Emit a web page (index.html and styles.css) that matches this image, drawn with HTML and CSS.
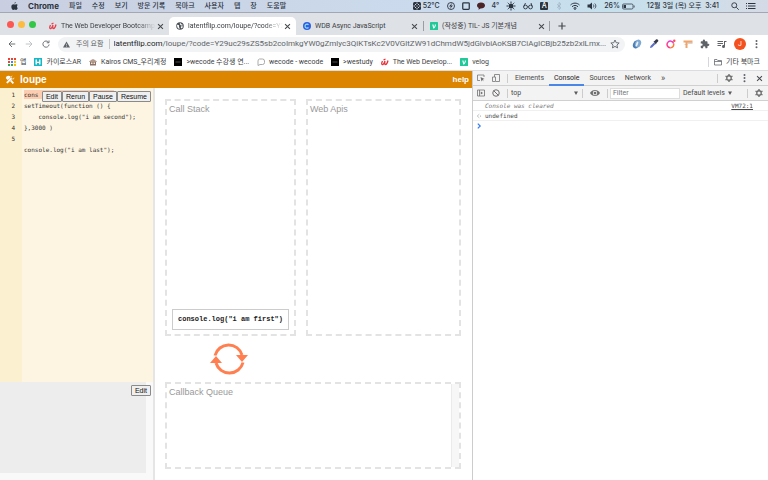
FILE: index.html
```html
<!DOCTYPE html>
<html lang="ko">

<head>
    <meta charset="UTF-8">
    <meta name="viewport" content="width=device-width, initial-scale=1.0">
    <title>loupe</title>
    <link rel="stylesheet" href="styles.css">
</head>

<body>
    <!-- 메뉴 막대 -->
    <header class="menubar">
        <svg class="apple" viewBox="0 0 14 16"><path d="M9.600 0c.1 1.400-1 3-2.700 3.100C6.700 1.700 8.100.2 9.600 0zM12 8.300c0-1.500 1.100-2.300 1.300-2.500-.9-1.200-2.200-1.400-2.700-1.400-1.300-.1-2.300.7-2.900.7-.6 0-1.500-.7-2.600-.7C3.200 4.500.7 5.800.7 9.300c0 3 2 6.500 3.900 6.500 1 0 1.500-.7 2.800-.7 1.300 0 1.600.7 2.700.7 1.700 0 3-2.700 3.400-3.900-.9-.4-1.500-1.800-1.500-3.600z"/></svg>
        <nav class="menus">
            <b>Chrome</b>
            <span>파일</span>
            <span>수정</span>
            <span>보기</span>
            <span>방문 기록</span>
            <span>북마크</span>
            <span>사용자</span>
            <span>탭</span>
            <span>창</span>
            <span>도움말</span>
        </nav>
        <div class="status">
            <span class="pair">
                <svg class="ic8" viewBox="0 0 16 16"><rect width="16" height="16" rx="3"/><path d="M4 4h2v2H4zM10 4h2v2h-2zM4 10h2v2H4zM10 10h2v2h-2zM7 7h2v2H7zM7 1h2v3H7zM7 12h2v3H7zM1 7h3v2H1zM12 7h3v2h-3z" fill="#cdd6e6"/></svg>
                52°C
            </span>
            <svg class="ic8" viewBox="0 0 16 16"><circle cx="8" cy="8" r="7" fill="none" stroke="#2c3440" stroke-width="1.800"/><path d="M11 1 4 9h4l-3 6 7-8H8z"/></svg>
            <svg class="ic8" viewBox="0 0 16 16"><rect x="1.500" y="1.500" width="13" height="13" rx="1.500" fill="none" stroke="#2c3440" stroke-width="2.500"/></svg>
            <svg class="ic8" viewBox="0 0 16 16"><path d="M8 1C3.500 1 0 3.500 0 7c0 2.300 1.500 4 3.500 5L3 15.500 7 13c5 .2 9-2.500 9-6S12.500 1 8 1z" fill="#4a2427"/></svg>
            <span>4°</span>
            <svg class="ic10" viewBox="0 0 20 20"><circle cx="10" cy="10" r="5"/><path d="M10 1v3M10 16v3M1 10h3M16 10h3M3.500 3.500l2 2M14.500 14.500l2 2M3.500 16.500l2-2M14.500 5.500l2-2" stroke="#2c3440" stroke-width="2"/></svg>
            <svg class="ic10" viewBox="0 0 20 20" fill="none" stroke="#2c3440" stroke-width="1.800"><circle cx="5" cy="12" r="3.800"/><circle cx="15" cy="12" r="3.800"/><path d="M9 12c.5-1 1.500-1 2 0M1.500 11 5 4M18.500 11 16 4"/></svg>
            <span class="input-badge">A</span>
            <svg class="ic8" viewBox="0 0 16 16"><path d="M4 4.500 12 11.500 8 15V1l4 3.500L4 11.500" fill="none" stroke="#9db0c2" stroke-width="1.500"/></svg>
            <svg class="ic10" viewBox="0 0 20 16" fill="none" stroke="#2c3440" stroke-width="2"><path d="M1 6c5-5 13-5 18 0M4 9.500c3.500-3.500 8.500-3.500 12 0M7 12.500c2-1.800 4-1.800 6 0"/><circle cx="10" cy="14" r="1"/></svg>
            <svg class="ic10" viewBox="0 0 20 16"><path d="M1 5h4l5-4v14l-5-4H1z"/><path d="M12.500 5c1.500 2 1.500 4 0 6M15.500 3c3 3 3 7 0 10" fill="none" stroke="#2c3440" stroke-width="1.600"/></svg>
            <span class="pair">26%
                <svg class="battery" viewBox="0 0 26 14"><rect x="1" y="2" width="21" height="10" rx="2.500" fill="none" stroke="#2c3440" stroke-width="1.500"/><rect x="3" y="4" width="5" height="6"/><path d="M23.500 5h1.500v4h-1.500z"/></svg>
            </span>
            <time class="clock">12월 3일 (목) 오후&nbsp; 3:41</time>
            <svg class="ic8" viewBox="0 0 16 16" fill="none" stroke="#2c3440" stroke-width="1.800"><circle cx="6.500" cy="6.500" r="5"/><path d="m10.500 10.500 5 5"/></svg>
            <svg class="ic10" viewBox="0 0 20 16"><path d="M0 2h2v2H0zM0 7h2v2H0zM0 12h2v2H0zM4 2h15v2H4zM4 7h15v2H4zM4 12h15v2H4z"/></svg>
        </div>
    </header>

    <!-- 탭 -->
    <div class="tabstrip">
        <div class="lights"><i class="red"></i><i class="yellow"></i><i class="green"></i></div>
        <div class="tab">
            <svg class="ic8" viewBox="0 0 16 16" fill="none" stroke="#e8404a" stroke-width="2.600"><path d="M3 6c-3 6-1 8 1 7s3-4 4-7c-1 5-1 7 1 7s4-4 5-8M5 4l4-2"/></svg>
            <span class="title fade">The Web Developer Bootcamp</span>
            <button class="close" aria-label="탭 닫기"><svg viewBox="0 0 10 10"><path d="m1.500 1.500 7 7m0-7-7 7"/></svg></button>
        </div>
        <div class="tab active">
            <svg class="ic8" viewBox="0 0 16 16"><circle cx="8" cy="8" r="7.500" fill="#4a4f56"/><path d="M2 6c3-1 5 1 4 3s2 2 1 5c-3-1-5-3-5-8zM8 2c2 0 2 3 4 3l2 1c-2 2-4 1-5 0S7 4 8 2zM10 9c2-1 4 0 4 1l-3 3c-1-1-2-3-1-4z" fill="#fff"/></svg>
            <span class="title fade">latentflip.com/loupe/?code=Y2</span>
            <button class="close" aria-label="탭 닫기"><svg viewBox="0 0 10 10"><path d="m1.500 1.500 7 7m0-7-7 7"/></svg></button>
        </div>
        <div class="tab">
            <svg class="ic8" viewBox="0 0 16 16"><circle cx="8" cy="8" r="8" fill="#2f5fe0"/><path d="M11 5.500A4 4 0 1 0 11 11" fill="none" stroke="#8fe3ff" stroke-width="2.200"/></svg>
            <span class="title">WDB Async JavaScript</span>
            <button class="close" aria-label="탭 닫기"><svg viewBox="0 0 10 10"><path d="m1.500 1.500 7 7m0-7-7 7"/></svg></button>
        </div>
        <div class="tab line">
            <svg class="ic8" viewBox="0 0 16 16"><rect width="16" height="16" rx="1" fill="#20c997"/><path d="M4.500 5H7l1 5c1-1 2-3 1.500-5H12c0 3-2 6-4 8H6.500z" fill="#fff"/></svg>
            <span class="title">(작성중) TIL- JS 기본개념</span>
            <button class="close" aria-label="탭 닫기"><svg viewBox="0 0 10 10"><path d="m1.500 1.500 7 7m0-7-7 7"/></svg></button>
        </div>
        <button class="newtab" aria-label="새 탭"><svg viewBox="0 0 10 10"><path d="M5 .5v9M.5 5h9"/></svg></button>
    </div>

    <!-- 주소창 -->
    <div class="toolbar">
        <div class="nav-btns">
            <svg viewBox="0 0 16 16"><path d="M14.500 8H2m6-6L2 8l6 6"/></svg>
            <svg class="off" viewBox="0 0 16 16"><path d="M1.500 8H14M8 2l6 6-6 6"/></svg>
            <svg viewBox="0 0 16 16"><path d="M13 4.500A6.200 6.200 0 1 0 14.200 9M14 1v4.500H9.500"/></svg>
        </div>
        <div class="omnibox">
            <svg class="warn" viewBox="0 0 14 14"><path d="M7 1 14 13H0z"/><path d="M6.400 5.500h1.200v3.500H6.400zM6.400 10h1.200v1.300H6.400z" fill="#f1f3f4"/></svg>
            <span class="insecure">주의 요함</span>
            <span class="url"><em>latentflip.com</em>/loupe/?code=Y29uc29sZS5sb2coImkgYW0gZmlyc3QiKTsKc2V0VGltZW91dChmdW5jdGlvbiAoKSB7CiAgICBjb25zb2xlLmx...</span>
            <svg class="ic10" viewBox="0 0 20 20"><path d="m10 2 2.400 5.400 5.900.6-4.400 4 1.200 5.800L10 14.800l-5.100 3L6.100 12 1.700 8l5.900-.6z" fill="none" stroke="#5f6368" stroke-width="1.800"/></svg>
        </div>
        <div class="exts">
            <svg class="ic10" viewBox="0 0 20 20"><ellipse cx="8" cy="11" rx="6" ry="8" transform="rotate(20 8 11)" fill="#4a7fb5"/><ellipse cx="12" cy="9" rx="6" ry="8" transform="rotate(20 12 9)" fill="#7fa9d1"/><ellipse cx="10" cy="10" rx="2" ry="5.500" transform="rotate(20 10 10)" fill="#e6eef7"/></svg>
            <svg class="ic10" viewBox="0 0 20 20"><path d="M2 18l1-4 7-7 3 3-7 7z" fill="#5b6fc4"/><path d="m9 5 2-1 3-3c3-2 6 2 4 4l-3 3-1 3z" fill="#333a48"/></svg>
            <svg class="ic10" viewBox="0 0 20 20" fill="none" stroke-width="3"><path d="M4 6.500a6.500 6.500 0 0 0 5 11" stroke="#ff3f8e"/><path d="M9 17.500a6.500 6.500 0 0 0 6-9" stroke="#ff7a2f"/><path d="M4 6.500a6.500 6.500 0 0 1 11 2" stroke="#e23fd0"/><circle cx="16.500" cy="3.500" r="2.500" fill="#ff4a55" stroke="none"/></svg>
            <svg class="ic10" viewBox="0 0 20 20"><path d="M1 3h18v4H9v11H5V7H1z" fill="#f0a56c"/><path d="M9 7h10v2H9zM3 11h6v1H3z" fill="#c7a58e"/></svg>
            <svg class="ic10" viewBox="0 0 20 20"><path d="M16.500 9.500H15V6a1.500 1.500 0 0 0-1.500-1.500H10V3.200a2.200 2.200 0 0 0-4.400 0v1.300H3A1.500 1.500 0 0 0 1.500 6v3H3a2.300 2.300 0 0 1 0 4.600H1.500V17A1.500 1.500 0 0 0 3 18.500h3.200V17a2.300 2.300 0 0 1 4.600 0v1.500h2.700A1.500 1.500 0 0 0 15 17v-3.100h1.500a2.200 2.200 0 0 0 0-4.400z" fill="#5f6368"/></svg>
            <svg class="ic10" viewBox="0 0 20 20"><path d="M1 4h11v2H1zM1 8h11v2H1zM1 12h7v2H1zM14 4h5v2h-3v9a3 3 0 1 1-2-2.800z" fill="#5f6368"/></svg>
        </div>
        <span class="avatar">J</span>
        <svg class="dots" viewBox="0 0 4 16"><circle cx="2" cy="3" r="1.600"/><circle cx="2" cy="8" r="1.600"/><circle cx="2" cy="13" r="1.600"/></svg>
    </div>

    <!-- 북마크 -->
    <nav class="bookmarks">
        <a href="#"><svg class="ic8" viewBox="0 0 16 16"><path d="M0 0h4v4H0zM6 0h4v4H6zM12 0h4v4h-4zM0 6h4v4H0z" fill="#ea4335"/><path d="M6 6h4v4H6z" fill="#4285f4"/><path d="M12 6h4v4h-4zM12 12h4v4h-4z" fill="#fbbc05"/><path d="M0 12h4v4H0zM6 12h4v4H6z" fill="#34a853"/></svg>앱</a>
        <a href="#"><svg class="ic8" viewBox="0 0 16 16"><rect width="16" height="16" fill="#15b8c4"/><path d="M3 3h3v4l2 1 2-1V3h3v10h-3V9.500l-2 1-2-1V13H3z" fill="#fff"/></svg>카이로스AR</a>
        <a href="#"><svg class="ic8" viewBox="0 0 16 16"><path d="M2 7h12v8H2z" fill="#8b7268"/><path d="M0 8c1-3 3-2 4-4l4-2 4 2c1 2 3 1 4 4z" fill="#b39a8c"/><path d="M4 9h3v3H4zM9 9h3v3H9z" fill="#f5e6d2"/></svg>Kairos CMS_우리계정</a>
        <a href="#"><svg class="ic8" viewBox="0 0 16 16"><path d="M0 0h16v16H0z" fill="#000"/><path d="M3 7.500h10v1H3z" fill="#999"/></svg>&gt;wecode 수강생 연...</a>
        <a href="#"><svg class="ic8" viewBox="0 0 16 16"><path d="M5 2h6a4 4 0 0 1 4 4v3a4 4 0 0 1-4 4H6l-4 2V6a4 4 0 0 1 3-4z" fill="none" stroke="#a2a2a2" stroke-width="1.800"/></svg>wecode - wecode</a>
        <a href="#"><svg class="ic8" viewBox="0 0 16 16"><path d="M0 0h16v16H0z" fill="#000"/><path d="M3 7.500h10v1H3z" fill="#999"/></svg>&gt;westudy</a>
        <a href="#"><svg class="ic8" viewBox="0 0 16 16" fill="none" stroke="#e8303a" stroke-width="2.600"><path d="M3 6c-3 6-1 8 1 7s3-4 4-7c-1 5-1 7 1 7s4-4 5-8M5 4l4-2"/></svg>The Web Develop...</a>
        <a href="#"><svg class="ic8" viewBox="0 0 16 16"><rect width="16" height="16" rx="1" fill="#20c997"/><path d="M4.500 5H7l1 5c1-1 2-3 1.500-5H12c0 3-2 6-4 8H6.500z" fill="#fff"/></svg>velog</a>
        <a href="#" class="others"><svg class="ic8" viewBox="0 0 16 16"><path d="M1 3h5l1.500 2H15v9H1zM1 7h14" fill="none" stroke="#5f6368" stroke-width="1.500"/></svg>기타 북마크</a>
    </nav>

    <main class="content">
        <section class="loupe">
            <div class="topbar">
                <h1><svg viewBox="0 0 20 20"><path d="M3 3c3-2 6-1.500 9 .5L9.500 6 18 15.500 15.500 18 6.500 8.500 5 10 1.500 6z"/><path d="M18.500 4.500 16 7l-2.500-.500L13 4l2.500-2.500c-3-1-5.500 1.500-4.500 4L2 14.500 5 17.500l8.500-8.500c3 1 6-1.500 5-4.500z" stroke="#dc8500" stroke-width=".8"/></svg>loupe</h1>
                <a href="#">help</a>
            </div>
            <div class="work">
                <div class="side">
                    <div class="editor">
                        <div class="gutter">1<br>2<br>3<br>4<br>5</div>
                        <pre class="code"><mark>cons</mark>
setTimeout(function () {
    console.log("i am second");
},3000 )

console.log("i am last");</pre>
                        <div class="btns">
                            <button>Edit</button>
                            <button>Rerun</button>
                            <button>Pause</button>
                            <button>Resume</button>
                        </div>
                    </div>
                    <div class="output">
                        <div class="preview"></div>
                        <div class="btns"><button>Edit</button></div>
                    </div>
                </div>
                <div class="stage">
                    <div class="upper">
                        <div class="box stack">
                            <h2>Call Stack</h2>
                            <div class="call">console.log("i am first")</div>
                        </div>
                        <div class="box">
                            <h2>Web Apis</h2>
                        </div>
                    </div>
                    <div class="loop">
                        <svg viewBox="0 0 38 32"><path d="M5 12.500A14 14 0 0 1 32 12M33 19.500A14 14 0 0 1 6 20" fill="none" stroke="#ff7f50" stroke-width="3"/><path d="M26 12h12l-6 7zM0 20h12l-6-7z" fill="#ff7f50"/></svg>
                    </div>
                    <div class="box">
                        <h2>Callback Queue</h2>
                        <div class="strip"></div>
                    </div>
                </div>
            </div>
        </section>

        <!-- 개발자 도구 -->
        <section class="devtools">
            <div class="dt-row">
                <svg class="ic8" viewBox="0 0 16 16" fill="none" stroke="#6e6e6e" stroke-width="1.500"><path d="M6 13H1V2h13v4"/><path d="m7 6 8 4-3.500 1L14 15l-3-3-2 3z" fill="#6e6e6e" stroke="none"/></svg>
                <svg class="ic8" viewBox="0 0 16 16" fill="none" stroke="#6e6e6e" stroke-width="1.500"><path d="M5 6V1h10v14H8"/><path d="M1 6h6v9H1z"/></svg>
                <i class="sep"></i>
                <div class="dt-tabs">
                    <span>Elements</span>
                    <span class="on">Console</span>
                    <span>Sources</span>
                    <span>Network</span>
                    <span class="more">»</span>
                </div>
                <i class="sep push"></i>
                <svg class="ic8" viewBox="0 0 16 16"><circle cx="8" cy="8" r="4.500" fill="none" stroke="#6e6e6e" stroke-width="2.600"/><path d="M8 0v3M8 13v3M1 4l2.600 1.500M12.400 10.500 15 12M1 12l2.600-1.500M12.400 5.500 15 4" stroke="#6e6e6e" stroke-width="2.800"/></svg>
                <svg class="dots" viewBox="0 0 4 16"><circle cx="2" cy="3" r="1.600"/><circle cx="2" cy="8" r="1.600"/><circle cx="2" cy="13" r="1.600"/></svg>
                <button class="close" aria-label="닫기"><svg viewBox="0 0 10 10"><path d="m1.500 1.500 7 7m0-7-7 7"/></svg></button>
            </div>
            <div class="dt-row">
                <svg class="ic8" viewBox="0 0 16 16"><path d="M1 2h14v12H1zM5 2v12" fill="none" stroke="#6e6e6e" stroke-width="1.600"/><path d="m7.500 5 4.500 3-4.500 3z" fill="#6e6e6e"/></svg>
                <svg class="ic8" viewBox="0 0 16 16"><path d="M8 1.500a6.500 6.500 0 1 0 0 13 6.500 6.500 0 0 0 0-13zM3.400 3.400l9.200 9.200" fill="none" stroke="#6e6e6e" stroke-width="2"/></svg>
                <i class="sep"></i>
                <select class="context" aria-label="Context">
                    <option>top</option>
                </select>
                <svg class="caret" viewBox="0 0 8 8"><path d="M0 1h8L4 8z"/></svg>
                <i class="sep"></i>
                <svg class="ic10" viewBox="0 0 16 16"><path d="M0 8c3-6.500 13-6.500 16 0-3 6.500-13 6.500-16 0z" fill="#6e6e6e"/><circle cx="8" cy="8" r="3.600" fill="#f3f3f3"/><circle cx="8" cy="8" r="2.200" fill="#6e6e6e"/></svg>
                <i class="sep"></i>
                <input class="filter" type="text" placeholder="Filter" aria-label="Filter">
                <button class="levels">Default levels <svg class="caret" viewBox="0 0 8 8"><path d="M0 1h8L4 8z"/></svg></button>
                <i class="sep push"></i>
                <svg class="ic8" viewBox="0 0 16 16"><circle cx="8" cy="8" r="4.500" fill="none" stroke="#6e6e6e" stroke-width="2.600"/><path d="M8 0v3M8 13v3M1 4l2.600 1.500M12.400 10.500 15 12M1 12l2.600-1.500M12.400 5.500 15 4" stroke="#6e6e6e" stroke-width="2.800"/></svg>
            </div>
            <div class="log">
                <div class="msg"><i></i><em>Console was cleared</em><a href="#">VM72:1</a></div>
                <div class="msg"><svg viewBox="0 0 10 10"><path d="M5.500 2 2 5l3.500 3" stroke="#999"/><circle cx="7.500" cy="5" r="1" fill="#999"/></svg><span>undefined</span></div>
                <div class="msg prompt"><svg viewBox="0 0 10 10"><path d="m3 1 4 4-4 4" stroke="#367cf1" stroke-width="2"/></svg></div>
            </div>
        </section>
    </main>
</body>

</html>
```

FILE: styles.css
```css
* {
    box-sizing: border-box;
}

html,
body {
    margin: 0;
    height: 100%;
}

body {
    display: flex;
    flex-direction: column;
    font: 7px/10px Roboto, "Noto Sans CJK KR", sans-serif;
    color: #3c4043;
    background: #fff;
    overflow: hidden;
}

svg {
    display: block;
    flex: none;
}

button {
    font: inherit;
    color: inherit;
    padding: 0;
    border: 0;
    background: none;
}

a {
    color: inherit;
    text-decoration: none;
}

.ic8 {
    width: 8px;
    height: 8px;
}

.ic10 {
    width: 10px;
    height: 10px;
}

/* 메뉴 막대 */
.menubar {
    display: flex;
    align-items: center;
    height: 13px;
    padding: 0 12px 0 11px;
    color: #2c3440;
    fill: #2c3440;
    font-family: Inter, "Noto Sans CJK KR", sans-serif;
    font-weight: 500;
    white-space: nowrap;
    background: linear-gradient(90deg, #c9cfe0, #cbdcee 60%, #c6e0ec 80%, #d5dbe6);
    border-bottom: 1px solid #a3a7b2;
}

.apple {
    width: 7px;
    height: 8px;
    margin-right: 10px;
}

.menus {
    display: flex;
    gap: 10px;
}

.menus b {
    font-size: 8px;
}

.status {
    display: flex;
    align-items: center;
    gap: 7px;
    margin-left: auto;
}

.pair {
    display: flex;
    align-items: center;
    gap: 2px;
}

.battery {
    width: 13px;
    height: 7px;
}

.input-badge {
    width: 8px;
    height: 8px;
    line-height: 8px;
    border-radius: 1px;
    text-align: center;
    color: #fff;
    background: #2c3440;
}

.clock {
    margin: 0 5px;
}

/* 탭 */
.tabstrip {
    display: flex;
    align-items: flex-end;
    height: 22px;
    background: #dee1e6;
}

.lights {
    display: flex;
    gap: 4px;
    align-self: center;
    width: 42px;
    padding-left: 7px;
}

.lights i {
    width: 7px;
    height: 7px;
    border-radius: 50%;
}

.red {
    background: #fc5753;
}

.yellow {
    background: #fdbc40;
}

.green {
    background: #33c748;
}

.tab {
    display: flex;
    align-items: center;
    flex: 0 1 127px;
    min-width: 0;
    gap: 4px;
    height: 18px;
    padding: 0 5px 0 7px;
    border-radius: 5px 5px 0 0;
}

.tab.active {
    background: #fff;
}

.tab.line {
    position: relative;
}

.tab.line::before,
.tab.line::after {
    content: "";
    position: absolute;
    left: 0;
    top: 4px;
    width: 1px;
    height: 10px;
    background: #9a9da2;
}

.tab.line::after {
    left: auto;
    right: 0;
}

.title {
    flex: 1;
    min-width: 0;
    margin-right: -3px;
    overflow: hidden;
    white-space: nowrap;
}

.fade {
    -webkit-mask-image: linear-gradient(90deg, #000 80%, transparent);
    mask-image: linear-gradient(90deg, #000 80%, transparent);
}

.close,
.newtab {
    width: 7px;
    height: 18px;
    display: grid;
    place-items: center;
}

.close svg {
    width: 7px;
    height: 7px;
}

.newtab {
    width: 8px;
    margin-left: 8px;
}

.newtab svg {
    width: 8px;
    height: 8px;
}

.close path,
.newtab path {
    fill: none;
    stroke: #45494d;
    stroke-width: 1.5;
}

/* 주소창 */
.toolbar {
    display: flex;
    align-items: center;
    height: 18px;
    padding: 0 10px 0 8px;
}

.nav-btns {
    display: flex;
    gap: 9px;
    width: 50px;
}

.nav-btns svg {
    width: 8px;
    height: 8px;
    fill: none;
    stroke: #5f6368;
    stroke-width: 1.8;
}

.nav-btns .off {
    stroke: #bbbdc0;
}

.omnibox {
    display: flex;
    align-items: center;
    flex: 1;
    min-width: 0;
    height: 15px;
    padding: 0 5px;
    border-radius: 8px;
    color: #5f6368;
    background: #f1f3f4;
}

.warn {
    width: 7px;
    height: 7px;
    margin-right: 6px;
    fill: #5f6368;
}

.insecure {
    padding-right: 5px;
    margin-right: 4px;
    border-right: 1px solid #c4c6c9;
    white-space: nowrap;
}

.url {
    flex: 1;
    overflow: hidden;
    white-space: nowrap;
    font-size: 8px;
}

.url em {
    font-style: normal;
    color: #202124;
}

.exts {
    display: flex;
    gap: 7px;
    margin: 0 7px;
}

.avatar {
    width: 12px;
    height: 12px;
    line-height: 12px;
    border-radius: 50%;
    text-align: center;
    color: #fff;
    background: #f4511e;
}

.dots {
    width: 3px;
    height: 10px;
    fill: #5f6368;
}

.toolbar .dots {
    margin-left: 9px;
}

/* 북마크 */
.bookmarks {
    display: flex;
    align-items: center;
    gap: 8px;
    height: 18px;
    padding: 0 8px;
    white-space: nowrap;
    border-bottom: 1px solid #dadce0;
}

.bookmarks a {
    display: flex;
    align-items: center;
    gap: 4px;
}

.bookmarks .others {
    margin-left: auto;
    padding-left: 5px;
    border-left: 1px solid #d5d7da;
}

.content {
    display: grid;
    grid-template-columns: minmax(0, 472fr) minmax(0, 296fr);
    flex: 1;
    min-height: 0;
}

/* loupe */
.loupe {
    display: flex;
    flex-direction: column;
    font-family: "Liberation Sans", Arial, sans-serif;
}

.topbar {
    display: flex;
    align-items: center;
    justify-content: space-between;
    height: 17px;
    padding: 0 3px 0 5px;
    color: #fff;
    font-size: 8px;
    font-weight: bold;
    background: #dc8500;
}

.topbar h1 {
    display: flex;
    align-items: center;
    gap: 5px;
    margin: 0;
    font-size: 10px;
}

.topbar svg {
    width: 10px;
    height: 10px;
    fill: #fff;
}

.work {
    display: grid;
    grid-template-columns: minmax(0, 155fr) minmax(0, 317fr);
    flex: 1;
    min-height: 0;
}

.side {
    display: grid;
    grid-template-rows: minmax(0, 3fr) minmax(0, 1fr);
    border-right: 2px solid #e5e5e5;
}

.editor {
    position: relative;
    display: flex;
    font: 6px/11px "DejaVu Sans Mono", monospace;
    color: #333;
    background: #fdf5e2;
}

.gutter {
    width: 22px;
    padding: 1px 7px 0 0;
    text-align: right;
    background: #fbf0d0;
}

.code {
    margin: 0;
    padding: 1px 2px;
    font: inherit;
}

.code mark {
    display: inline-block;
    width: 25ch;
    height: 9px;
    line-height: 9px;
    color: inherit;
    background: #fccdb0;
}

.btns {
    position: absolute;
    top: 3px;
    right: 2px;
    display: flex;
}

.btns button {
    height: 11px;
    padding: 0 3px;
    font: 7px/9px "Liberation Sans", Arial, sans-serif;
    color: #111;
    background: #efefef;
    border: 1px solid #8a8a8a;
    border-radius: 1px;
}

.output {
    position: relative;
    padding: 0 7px 7px 0;
    background: #f9f9f9;
}

.preview {
    height: 100%;
    background: #ededed;
}

.stage {
    display: grid;
    grid-template-rows: minmax(0, 237fr) minmax(0, 46fr) minmax(0, 87fr);
    padding: 11px 11px 11px 10px;
}

.upper {
    display: grid;
    grid-template-columns: minmax(0, 131fr) minmax(0, 155fr);
    gap: 10px;
}

.box {
    position: relative;
    padding: 3px 2px;
    border: 2px dashed #e3e3e3;
}

.box h2 {
    margin: 0;
    font-size: 9px;
    line-height: 10px;
    font-weight: normal;
    color: #999;
}

.stack {
    display: flex;
    flex-direction: column;
    justify-content: space-between;
}

.call {
    margin: 0 3px 1px;
    padding: 5px 0;
    text-align: center;
    font: bold 7px/9px "Liberation Mono", monospace;
    color: #222;
    border: 1px solid #ccc;
}

.loop {
    display: grid;
    place-items: center;
    width: 43%;
}

.loop svg {
    width: 38px;
    height: 32px;
}

.strip {
    position: absolute;
    top: 0;
    right: 0;
    bottom: 0;
    width: 8px;
    background: #f7f7f7;
    border-left: 1px solid #ebebeb;
}

/* 개발자 도구 */
.devtools {
    border-left: 1px solid #ccc;
    color: #4a4a4a;
}

.dt-row {
    display: flex;
    align-items: center;
    gap: 7px;
    height: 15px;
    padding: 0 5px 0 4px;
    background: #f3f3f3;
    border-bottom: 1px solid #d0d0d0;
}

.dt-row .sep {
    width: 1px;
    height: 9px;
    background: #ccc;
}

.dt-row .push {
    margin-left: auto;
}

.dt-row .dots {
    margin: 0 3px;
}

.dt-row .close {
    height: 10px;
}

.dt-tabs {
    display: flex;
    height: 15px;
    margin-left: -5px;
    line-height: 14px;
}

.dt-tabs span {
    padding: 0 5px;
}

.dt-tabs .on {
    color: #222;
    border-bottom: 2px solid #4a86e8;
}

.dt-tabs .more {
    font-size: 9px;
}

.context {
    flex: 0 1 59px;
    min-width: 0;
    margin-left: -4px;
    padding: 0;
    border: 0;
    font: inherit;
    color: inherit;
    background: none;
    appearance: none;
}

.caret {
    width: 4px;
    height: 4px;
    fill: #5a5a5a;
}

.dt-row .context + .caret {
    margin: 0 -3px;
}

.filter {
    flex: 0 1 70px;
    min-width: 0;
    height: 11px;
    margin-left: -5px;
    padding: 0 2px;
    font: inherit;
    border: 1px solid #ddd;
}

.filter::placeholder {
    color: #757575;
}

.levels {
    display: flex;
    align-items: center;
    gap: 3px;
    margin-left: -4px;
    white-space: nowrap;
}

.log {
    font: 6px/9px "DejaVu Sans Mono", monospace;
}

.msg {
    display: flex;
    align-items: center;
    height: 10px;
    padding-right: 15px;
    border-bottom: 1px solid #f0f0f0;
}

.msg i,
.msg svg {
    width: 6px;
    height: 6px;
    margin: 0 3px;
    fill: none;
}

.msg em {
    color: #777;
}

.msg a {
    margin-left: auto;
    text-decoration: underline;
}

.prompt {
    border: 0;
}
```
